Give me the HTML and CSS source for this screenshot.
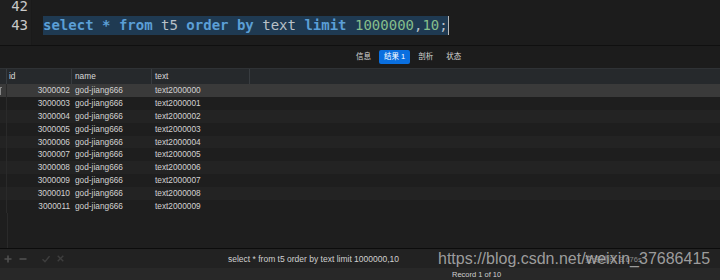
FILE: index.html
```html
<!DOCTYPE html>
<html>

<head>
    <meta charset="UTF-8">
    <link rel="stylesheet" href="styles.css">
</head>

<body>
    <div class="window">
        <div class="editor">
            <div class="gutter">
                <div class="line">42</div>
                <div class="line">43</div>
            </div>
            <div class="code">
                <div class="line"></div>
                <div class="line"><span class="sel"><span class="kw">select</span> <span class="kw">*</span> <span class="kw">from</span> <span class="id">t5</span> <span class="kw">order</span> <span class="kw">by</span> <span class="id">text</span> <span class="kw">limit</span> <span class="num">1000000</span><span class="id">,</span><span class="num">10</span><span class="id">;</span></span><span class="caret"></span></div>
            </div>
        </div>

        <div class="tabs">
            <span class="tab">信息</span>
            <span class="tab active">结果 1</span>
            <span class="tab">剖析</span>
            <span class="tab">状态</span>
        </div>

        <div class="grid-head">
            <div class="cell"></div>
            <div class="cell">id</div>
            <div class="cell">name</div>
            <div class="cell">text</div>
            <div class="cell last"></div>
        </div>

        <div class="grid-body" id="rows"></div>

        <div class="toolbar">
            <div class="tools">
                <svg width="8" height="8" viewBox="0 0 8 8"><path d="M4 0.5V7.5M0.5 4H7.5" stroke="#505050" stroke-width="1.6"/></svg>
                <svg width="8" height="8" viewBox="0 0 8 8"><path d="M0.5 4H7.5" stroke="#505050" stroke-width="1.6"/></svg>
                <svg class="gap" width="8" height="8" viewBox="0 0 8 8"><path d="M0.5 4.2L3 6.6L7.5 1.2" stroke="#3e3e3e" stroke-width="1.4" fill="none"/></svg>
                <svg width="7" height="7" viewBox="0 0 7 7"><path d="M0.7 0.7L6.3 6.3M6.3 0.7L0.7 6.3" stroke="#3e3e3e" stroke-width="1.4"/></svg>
            </div>
            <span class="query">select * from t5 order by text limit 1000000,10</span>
            <span class="time">查询时间: 3.676s</span>
            <span class="watermark">https://blog.csdn.net/weixin_37686415</span>
        </div>

        <div class="status">Record 1 of 10</div>
    </div>

    <script>
        var rows = document.getElementById('rows');
        for (var i = 0; i < 10; i++) {
            var row = document.createElement('div');
            row.className = 'row' + (i == 0 ? ' current' : (i % 2 == 0 ? ' alt' : ''));
            row.innerHTML =
                '<div class="cell mark">' + (i == 0 ? '<span class="marker"></span>' : '') + '</div>' +
                '<div class="cell num-cell">' + (3000002 + i) + '</div>' +
                '<div class="cell">god-jiang666</div>' +
                '<div class="cell">text' + (2000000 + i) + '</div>' +
                '<div class="cell last"></div>';
            rows.appendChild(row);
        }
    </script>
</body>

</html>
```

FILE: styles.css
```css
body {
    margin: 0;
    background-color: #1e1e1e;
    overflow: hidden;
}

.window {
    width: 720px;
    height: 280px;
    display: flex;
    flex-direction: column;
    font-family: "Liberation Sans", "Noto Sans CJK SC", sans-serif;
}

/* editor */
.editor {
    height: 45px;
    flex: none;
    display: flex;
    overflow: hidden;
    background-color: #1e1e1e;
    border-bottom: 1px solid #101010;
    font-family: "DejaVu Sans Mono", monospace;
    font-size: 14px;
}

.line {
    height: 19px;
    line-height: 19px;
    white-space: pre;
}

.gutter {
    width: 28px;
    padding-right: 3px;
    margin-top: -3px;
    text-align: right;
    color: #c9c9c9;
    background-color: #1f1f1f;
}

.code {
    flex: 1;
    margin-top: -3px;
    padding-left: 11px;
    border-left: 1px solid #1a1a1a;
    background-color: #1c1c1c;
}

.sel {
    display: inline-block;
    background-color: #1f3a52;
}

.caret {
    display: inline-block;
    width: 1px;
    height: 19px;
    vertical-align: top;
    background-color: #b8b8b8;
}

.kw {
    color: #5b9fd6;
    font-weight: bold;
}

.id {
    color: #b9c1c8;
}

.num {
    color: #86be8c;
}

/* result tabs */
.tabs {
    height: 22px;
    flex: none;
    display: flex;
    align-items: center;
    gap: 3px;
    padding-left: 351px;
    background-color: #1c1c1c;
    font-size: 7.5px;
    color: #d6d6d6;
}

.tab {
    height: 14px;
    line-height: 14px;
    padding: 0 5px;
    border-radius: 2px;
}

.tab.active {
    background-color: #0a6fdf;
    color: #ffffff;
}

/* grid */
.grid-head,
.row {
    display: grid;
    grid-template-columns: 7px 65px 80px 98px 1fr;
}

.grid-head {
    height: 15px;
    flex: none;
    border-top: 1px solid #2f3235;
    background-color: #26292c;
    color: #dadada;
    font-size: 8.3px;
    line-height: 15px;
}

.grid-head .cell {
    padding-left: 2px;
    border-right: 1px solid #383c40;
}

.grid-head .cell:first-child {
    padding-left: 0;
}

.grid-head .cell:nth-child(3),
.grid-head .cell:nth-child(4) {
    padding-left: 3px;
}

.cell.last {
    border-right: none !important;
}

.grid-body {
    flex: 1;
    background: linear-gradient(to right, transparent 7px, #2a2a2a 7px, #2a2a2a 8px, transparent 8px);
}

.row {
    height: 12.9px;
    line-height: 12.9px;
    font-size: 8.3px;
    color: #d2d2d2;
    background-color: #1e1e1e;
}

.row.alt {
    background-color: #232323;
}

.row.current {
    background-color: #3a3a3a;
}

.row .cell {
    white-space: nowrap;
    padding-left: 3px;
}

.row .mark {
    padding-left: 0;
    border-right: 1px solid #2a2a2a;
    position: relative;
}

.marker {
    position: absolute;
    left: 0;
    top: 3px;
    width: 1px;
    height: 7px;
    border-left: 1px solid #8a8a8a;
    border-top: 1px solid #8a8a8a;
}

.row .num-cell {
    text-align: right;
    padding-right: 2px;
    padding-left: 0;
}

/* bottom bar */
.toolbar {
    height: 19px;
    flex: none;
    display: flex;
    align-items: center;
    position: relative;
    border-top: 1px solid #0c0c0c;
    background-color: #222222;
    font-size: 8.5px;
    color: #d0d0d0;
}

.tools {
    display: flex;
    align-items: center;
    gap: 7px;
    padding-left: 4px;
    width: 224px;
}

.tools .gap {
    margin-left: 8px;
}

.query {
    white-space: nowrap;
}

.time {
    margin-left: 186px;
    font-size: 7.5px;
    color: #8a8a8a;
    white-space: nowrap;
}

.watermark {
    position: absolute;
    left: 438px;
    top: 1px;
    font-size: 16px;
    line-height: 18px;
    color: rgba(190, 190, 190, 0.8);
    white-space: nowrap;
}

.status {
    height: 12px;
    flex: none;
    padding-left: 452px;
    background-color: #282828;
    font-size: 7.5px;
    line-height: 14px;
    color: #d0d0d0;
}
```
